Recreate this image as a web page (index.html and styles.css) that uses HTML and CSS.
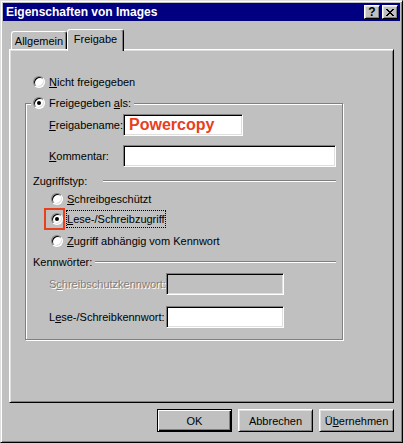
FILE: index.html
```html
<!DOCTYPE html>
<html lang="de">
<head>
  <meta charset="utf-8">
  <title>Eigenschaften von Images</title>
  <link rel="stylesheet" href="styles.css">
</head>
<body>

<div class="window">
  <div class="titlebar">
    <span class="title">Eigenschaften von Images</span>
    <div class="caption-btns">
      <span class="cap-btn help">?</span>
      <span class="cap-btn close">
        <svg width="8" height="7" viewBox="0 0 8 7" shape-rendering="crispEdges">
          <path d="M0 0h2v1h-2z M6 0h2v1h-2z M1 1h2v1h-2z M5 1h2v1h-2z M2 2h4v1h-4z M3 3h2v1h-2z M2 4h4v1h-4z M1 5h2v1h-2z M5 5h2v1h-2z M0 6h2v1h-2z M6 6h2v1h-2z" fill="#000"/>
        </svg>
      </span>
    </div>
  </div>

  <div class="tabs">
    <span class="tab">Allgemein</span>
    <span class="tab active">Freigabe</span>
  </div>

  <div class="panel">
    <div class="option top-option">
      <span class="radio"></span>
      <span><u>N</u>icht freigegeben</span>
    </div>

    <fieldset class="group">
      <legend class="option legend">
        <span class="radio checked"></span>
        <span>Freigegeben <u>a</u>ls:</span>
      </legend>

      <div class="group-body">
        <div class="field">
          <label class="field-label"><u>F</u>reigabename:</label>
          <input class="input name-input" type="text" value="Powercopy">
        </div>
        <div class="field field-gap">
          <label class="field-label"><u>K</u>ommentar:</label>
          <input class="input wide" type="text">
        </div>

        <div class="sep sep-access">
          <span class="sep-label">Zugriffstyp:</span>
          <span class="sep-line"></span>
        </div>

        <div class="choices">
          <div class="option">
            <span class="radio"></span>
            <span><u>S</u>chreibgeschützt</span>
          </div>
          <div class="option marked">
            <span class="marker"></span>
            <span class="radio checked"></span>
            <span class="focus"><u>L</u>ese-/Schreibzugriff</span>
          </div>
          <div class="option last">
            <span class="radio"></span>
            <span><u>Z</u>ugriff abhängig vom Kennwort</span>
          </div>
        </div>

        <div class="sep sep-pw">
          <span class="sep-label">Kennwörter:</span>
          <span class="sep-line"></span>
        </div>

        <div class="field pw first-pw">
          <label class="field-label disabled">S<u>c</u>hreibschutzkennwort:</label>
          <input class="input pw-input" type="text" disabled>
        </div>
        <div class="field pw second-pw">
          <label class="field-label">L<u>e</u>se-/Schreibkennwort:</label>
          <input class="input pw-input" type="text">
        </div>
      </div>
    </fieldset>
  </div>

  <div class="actions">
    <button class="btn default">OK</button>
    <button class="btn">Abbrechen</button>
    <button class="btn">Ü<u>b</u>ernehmen</button>
  </div>
</div>

</body>
</html>
```

FILE: styles.css
```css
* {
  box-sizing: border-box;
}

body {
  margin: 0;
  background: #c0c0c0;
  font-family: "Liberation Sans", Arial, sans-serif;
  font-size: 11px;
  color: #000;
}

u {
  text-decoration-thickness: 1px;
  text-underline-offset: 1px;
}

/* window frame */
.window {
  width: 403px;
  height: 443px;
  padding: 2px;
  border: 1px solid;
  border-color: #dfdfdf #000 #000 #dfdfdf;
  box-shadow: inset 1px 1px #fff, inset -1px -1px #808080;
  background: #c0c0c0;
  display: flex;
  flex-direction: column;
}

.titlebar {
  height: 18px;
  background: #000080;
  color: #fff;
  display: flex;
  align-items: center;
  padding: 0 2px 0 3px;
}

.title {
  flex: 1;
  font-weight: bold;
  font-size: 12px;
}

.caption-btns {
  display: flex;
  gap: 2px;
}

.cap-btn {
  width: 16px;
  height: 14px;
  background: #c0c0c0;
  border: 1px solid;
  border-color: #fff #000 #000 #fff;
  box-shadow: inset 1px 1px #dfdfdf, inset -1px -1px #808080;
  display: flex;
  align-items: center;
  justify-content: center;
  color: #000;
}

.help {
  font-weight: bold;
  font-size: 12px;
  line-height: 12px;
}

/* tabs */
.tabs {
  display: flex;
  align-items: flex-end;
  height: 20px;
  margin: 8px 6px 0;
  padding-left: 2px;
  position: relative;
  z-index: 1;
}

.tab {
  width: 56px;
  height: 18px;
  padding-top: 1px;
  border: 1px solid;
  border-bottom: none;
  border-color: #fff #000 transparent #fff;
  border-radius: 3px 3px 0 0;
  box-shadow: inset -1px 0 #808080;
  background: #c0c0c0;
  display: flex;
  align-items: center;
  justify-content: center;
}

.tab.active {
  width: 57px;
  height: 22px;
  padding-top: 0;
  padding-bottom: 3px;
  margin-bottom: -2px;
}

.panel {
  height: 354px;
  margin: 0 6px;
  padding: 24px 0 0 15px;
  border: 1px solid;
  border-color: #fff #000 #000 #fff;
  box-shadow: inset 1px 1px #dfdfdf, inset -1px -1px #808080;
}

/* radios */
.option {
  display: flex;
  align-items: center;
  gap: 4px;
  height: 16px;
}

.top-option {
  margin-left: 8px;
}

.radio {
  flex: none;
  position: relative;
  width: 12px;
  height: 12px;
  border-radius: 50%;
  border: 1px solid;
  border-color: #808080 #fff #fff #808080;
  box-shadow: inset 1px 1px #000, inset -1px -1px #dfdfdf;
  background: #fff;
}

.radio.checked::after {
  content: "";
  position: absolute;
  left: 3px;
  top: 3px;
  width: 4px;
  height: 4px;
  border-radius: 50%;
  background: #000;
}

/* group box */
.group {
  width: 318px;
  margin: 5px 0 0;
  padding: 0;
  border: 1px solid #808080;
  box-shadow: inset 1px 1px #fff, 1px 1px #fff;
}

.legend {
  margin-left: 5px;
  padding: 0 3px 0 2px;
  background: #c0c0c0;
}

.group-body {
  padding: 3px 6px 11px 7px;
}

.field {
  display: flex;
  align-items: center;
  height: 22px;
  margin-left: 16px;
}

.field-gap {
  margin-top: 9px;
}

.field-label {
  flex: none;
  width: 74px;
}

.field-label.disabled {
  color: #808080;
  text-shadow: 1px 1px #fff;
}

.input {
  height: 22px;
  width: 120px;
  padding: 0 3px;
  border: 1px solid;
  border-color: #808080 #fff #fff #808080;
  box-shadow: inset 1px 1px #000, inset -1px -1px #dfdfdf;
  background: #fff;
  font: inherit;
  outline: none;
}

.name-input {
  padding-left: 5px;
  color: #e8401c;
  font-weight: bold;
  font-size: 16px;
}

.wide {
  flex: 1;
  width: auto;
  min-width: 0;
}

.input:disabled {
  background: #c0c0c0;
}

/* separators */
.sep {
  display: flex;
  align-items: center;
  height: 16px;
}

.sep-label {
  flex: none;
}

.sep-access {
  margin-top: 6px;
}

.sep-access .sep-label {
  width: 70px;
}

.sep-pw {
  margin-top: 5px;
}

.sep-pw .sep-label {
  width: 62px;
}

.sep-line {
  flex: 1;
  height: 2px;
  border-top: 1px solid #808080;
  border-bottom: 1px solid #fff;
}

.choices {
  display: flex;
  flex-direction: column;
  gap: 4px;
  margin: 2px 0 0 18px;
}

.choices .last {
  margin-top: 2px;
}

.marked {
  position: relative;
}

.marker {
  position: absolute;
  left: -7px;
  top: -3px;
  width: 21px;
  height: 22px;
  border: 2px solid #e8401c;
}

.focus {
  display: inline-block;
  height: 16px;
  line-height: 16px;
  outline: 1px dotted #000;
}

.pw .field-label {
  width: 117px;
}

.pw-input {
  width: 118px;
}

.first-pw {
  margin-top: 3px;
}

.second-pw {
  margin-top: 11px;
}

/* bottom buttons */
.actions {
  display: flex;
  justify-content: flex-end;
  gap: 6px;
  margin-top: 6px;
  padding-right: 6px;
}

.btn {
  width: 75px;
  height: 23px;
  padding: 0;
  border: 1px solid;
  border-color: #fff #000 #000 #fff;
  box-shadow: inset 1px 1px #dfdfdf, inset -1px -1px #808080;
  background: #c0c0c0;
  font: inherit;
  color: #000;
}

.btn.default {
  border-color: #000;
  box-shadow: inset 1px 1px #fff, inset -1px -1px #000, inset -2px -2px #808080;
}
```
